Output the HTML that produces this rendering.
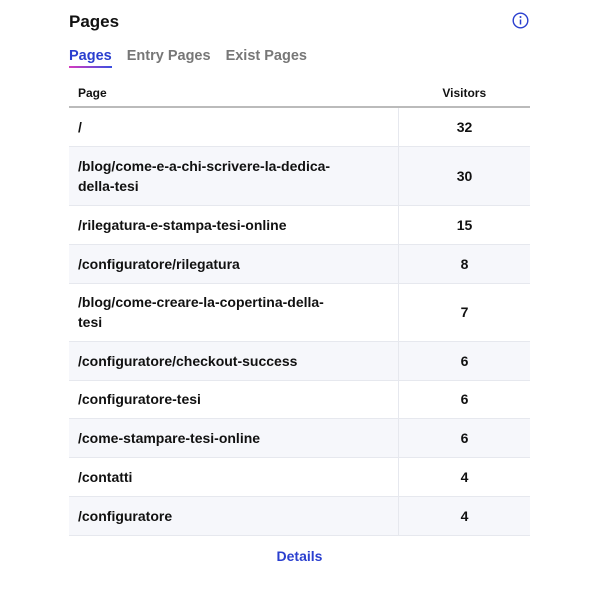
<!DOCTYPE html>
<html><head><style>
body{margin:0;background:#fff;font-family:"Liberation Sans",sans-serif;color:#111;}
.wrap{position:absolute;left:69px;top:0;width:461px;}
h1{position:absolute;left:0;top:12px;margin:0;font-size:17px;font-weight:700;}
.info{position:absolute;left:443px;top:12px;}
.tabs{position:absolute;top:48px;left:0;font-size:14.5px;font-weight:700;color:#777;}
.tabs span{margin-right:15px;display:inline-block;}
.tabs .a{color:#2a3fcf;position:relative;}
.tabs .a:after{content:"";position:absolute;left:0;right:0;bottom:-4px;height:2px;background:linear-gradient(90deg,#d63bbf,#3a4fe0);}
table{position:absolute;top:80px;left:0;width:461px;border-collapse:collapse;font-size:14px;font-weight:700;}
th{height:26px;font-size:12px;text-align:left;padding:0 9px;border-bottom:2px solid #bbb;}
th.v{text-align:center;}
td{padding:0 9px;border-bottom:1px solid #e6e8ee;line-height:20px;}
td.v{text-align:center;border-left:1px solid #e6e8ee;width:113px;}
tr.e td{background:#f6f7fb;}
.det{position:absolute;top:548px;left:0;width:461px;text-align:center;color:#2a3fcf;font-weight:700;font-size:14px;}
</style></head><body><div class="wrap">
<h1>Pages</h1>
<svg class="info" width="17" height="17" viewBox="0 0 17 17"><circle cx="8.5" cy="8.5" r="7.3" fill="none" stroke="#2a3fcf" stroke-width="1.4"/><circle cx="8.5" cy="5" r="1" fill="#2a3fcf"/><path d="M8.5 7.5v5" stroke="#2a3fcf" stroke-width="1.5"/></svg>
<div class="tabs"><span class="a">Pages</span><span>Entry Pages</span><span>Exist Pages</span></div>
<table>
<tr><th>Page</th><th class="v">Visitors</th></tr>
<tr style="height:39px"><td>/</td><td class="v">32</td></tr>
<tr class="e" style="height:59px"><td>/blog/come-e-a-chi-scrivere-la-dedica-<br>della-tesi</td><td class="v">30</td></tr>
<tr style="height:39px"><td>/rilegatura-e-stampa-tesi-online</td><td class="v">15</td></tr>
<tr class="e" style="height:39px"><td>/configuratore/rilegatura</td><td class="v">8</td></tr>
<tr style="height:58px"><td>/blog/come-creare-la-copertina-della-<br>tesi</td><td class="v">7</td></tr>
<tr class="e" style="height:39px"><td>/configuratore/checkout-success</td><td class="v">6</td></tr>
<tr style="height:38px"><td>/configuratore-tesi</td><td class="v">6</td></tr>
<tr class="e" style="height:39px"><td>/come-stampare-tesi-online</td><td class="v">6</td></tr>
<tr style="height:39px"><td>/contatti</td><td class="v">4</td></tr>
<tr class="e" style="height:39px"><td>/configuratore</td><td class="v">4</td></tr>
</table>
<div class="det">Details</div>
</div></body></html>
